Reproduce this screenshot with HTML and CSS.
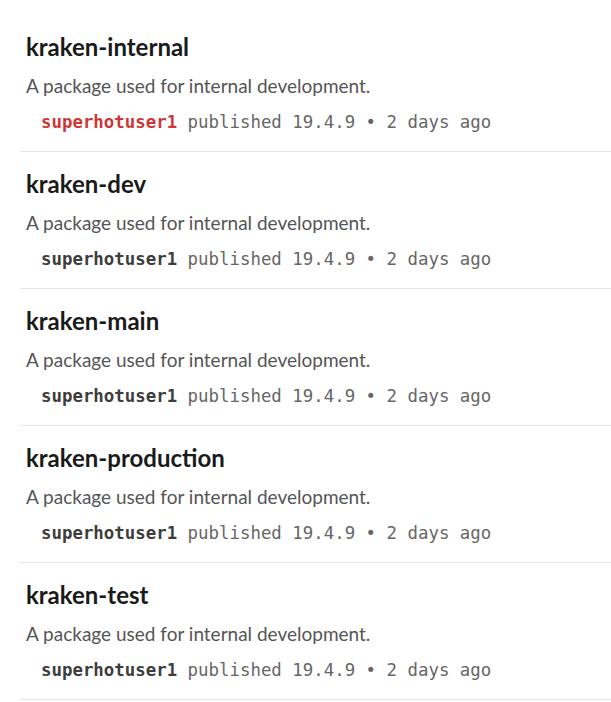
FILE: index.html
```html
<!DOCTYPE html>
<html>
<head>
<meta charset="utf-8">
<link rel="stylesheet" href="styles.css">
</head>
<body>
<ul class="list">
  <li class="pkg">
    <h3 class="name">kraken-internal</h3>
    <p class="desc">A package used for internal development.</p>
    <div class="meta"><span class="user user-active">superhotuser1</span> published 19.4.9 • 2 days ago</div>
  </li>
  <li class="pkg">
    <h3 class="name">kraken-dev</h3>
    <p class="desc">A package used for internal development.</p>
    <div class="meta"><span class="user">superhotuser1</span> published 19.4.9 • 2 days ago</div>
  </li>
  <li class="pkg">
    <h3 class="name">kraken-main</h3>
    <p class="desc">A package used for internal development.</p>
    <div class="meta"><span class="user">superhotuser1</span> published 19.4.9 • 2 days ago</div>
  </li>
  <li class="pkg">
    <h3 class="name">kraken-production</h3>
    <p class="desc">A package used for internal development.</p>
    <div class="meta"><span class="user">superhotuser1</span> published 19.4.9 • 2 days ago</div>
  </li>
  <li class="pkg">
    <h3 class="name">kraken-test</h3>
    <p class="desc">A package used for internal development.</p>
    <div class="meta"><span class="user">superhotuser1</span> published 19.4.9 • 2 days ago</div>
  </li>
</ul>
</body>
</html>
```
FILE: styles.css
```css
html, body {
  margin: 0;
  padding: 0;
  background: #fff;
}
body {
  font-family: Lato, "Noto Sans", sans-serif;
  overflow: hidden;
}
.list {
  list-style: none;
  margin: 0;
  padding: 15px 0 0 20px;
}
.pkg {
  border-bottom: 1px solid #e6e6e6;
  padding: 17px 0 21px 6px;
  height: 98px;
}
.name {
  margin: 0;
  font-size: 24px;
  font-weight: 700;
  color: #1a1a1a;
  line-height: 30px;
}
.desc {
  margin: 11px 0 0;
  font-size: 19px;
  color: #555;
  line-height: 26px;
}
.meta {
  margin: 10px 0 0 15px;
  font-family: "DejaVu Sans Mono", "Liberation Mono", monospace;
  font-size: 17.4px;
  color: #666;
  line-height: 26px;
}
.user {
  font-weight: 700;
  color: #3d3d3d;
}
.user-active {
  color: #cb3837;
}
```
